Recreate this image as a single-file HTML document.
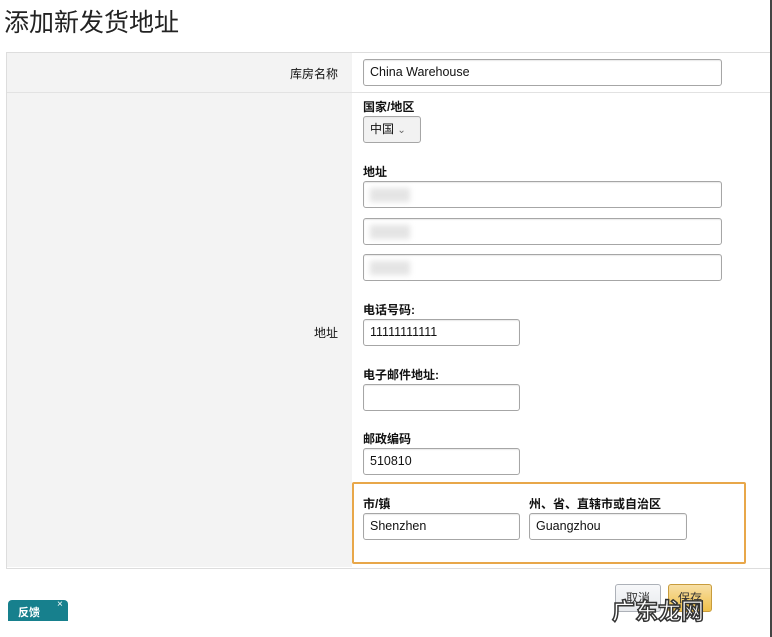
<!DOCTYPE html>
<html><head><meta charset="utf-8"><style>
body{margin:0;width:772px;height:637px;background:#fff;position:relative;overflow:hidden;font-family:"Liberation Sans","Noto Sans CJK SC",sans-serif;color:#111}
.a{position:absolute}
h1{position:absolute;left:4px;top:3px;margin:0;font-weight:normal;font-size:25px;color:#222;font-family:"Noto Sans CJK SC",sans-serif}
.panel{left:6px;top:52px;width:766px;height:515px;border-top:1px solid #ddd;border-bottom:1px solid #ddd;border-left:1px solid #ddd;background:#fff}
.left{left:7px;top:53px;width:345px;height:514px;background:#f3f3f3}
.div{left:7px;top:92px;width:765px;height:1px;background:#e2e2e2}
.in{position:absolute;height:25px;border:1px solid #a6a6a6;border-radius:3px;background:#fff;font-size:12.5px;line-height:25px;padding-left:6px;box-sizing:content-box;box-shadow:inset 0 1px 1px #e8e8e8}
.lb{position:absolute;font-size:12px;font-weight:bold;color:#111}
.blur{position:absolute;width:40px;height:14px;background:#e4e4e4;filter:blur(3px)}
</style></head><body>
<h1>添加新发货地址</h1>
<div class="a panel"></div>
<div class="a left"></div>
<div class="a div"></div>
<div class="a" style="left:290px;top:65px;font-size:12px">库房名称</div>
<div class="in" style="left:363px;top:59px;width:351px">China Warehouse</div>
<div class="lb" style="left:363px;top:98px">国家/地区</div>
<div class="in" style="left:363px;top:116px;width:50px;background:#f2f2f2;font-size:12px">中国 <span style="color:#666;font-size:10px">&#8964;</span></div>
<div class="lb" style="left:363px;top:163px">地址</div>
<div class="in" style="left:363px;top:181px;width:351px"></div><div class="blur" style="left:370px;top:188px"></div>
<div class="in" style="left:363px;top:218px;width:351px"></div><div class="blur" style="left:370px;top:225px"></div>
<div class="in" style="left:363px;top:254px;width:351px"></div><div class="blur" style="left:370px;top:261px"></div>
<div class="a" style="left:314px;top:324px;font-size:12px">地址</div>
<div class="lb" style="left:363px;top:301px">电话号码:</div>
<div class="in" style="left:363px;top:319px;width:149px">11111111111</div>
<div class="lb" style="left:363px;top:366px">电子邮件地址:</div>
<div class="in" style="left:363px;top:384px;width:149px"></div>
<div class="lb" style="left:363px;top:430px">邮政编码</div>
<div class="in" style="left:363px;top:448px;width:149px">510810</div>
<div class="a" style="left:352px;top:482px;width:390px;height:78px;border:2px solid #e8a74a;border-radius:2px"></div>
<div class="lb" style="left:363px;top:495px">市/镇</div>
<div class="in" style="left:363px;top:513px;width:149px">Shenzhen</div>
<div class="lb" style="left:529px;top:495px">州、省、直辖市或自治区</div>
<div class="in" style="left:529px;top:513px;width:150px">Guangzhou</div>
<div class="a" style="left:615px;top:584px;width:44px;height:26px;border:1px solid #adb1b8;border-radius:3px;background:linear-gradient(#f7f8fa,#e7e9ec);font-size:12px;line-height:26px;text-align:center;color:#333">取消</div>
<div class="a" style="left:668px;top:584px;width:42px;height:26px;border:1px solid #c89c3c;border-radius:3px;background:linear-gradient(#f7dfa5,#f0c14b);font-size:12px;line-height:26px;text-align:center;color:#333">保存</div>
<div class="a" style="left:612px;top:592px;font-size:23px;font-weight:bold;color:#fff;-webkit-text-stroke:1.5px #333;font-family:'Noto Sans CJK SC',sans-serif">广东龙网</div>
<div class="a" style="left:8px;top:600px;width:60px;height:21px;background:#17808d;border-radius:4px 4px 0 0"></div>
<div class="a" style="left:18px;top:604px;font-size:11px;color:#fff;font-weight:bold">反馈</div>
<div class="a" style="left:57px;top:599px;font-size:10px;color:#fff">×</div>
<div class="a" style="left:770px;top:0;width:2px;height:637px;background:#444"></div>
</body></html>
